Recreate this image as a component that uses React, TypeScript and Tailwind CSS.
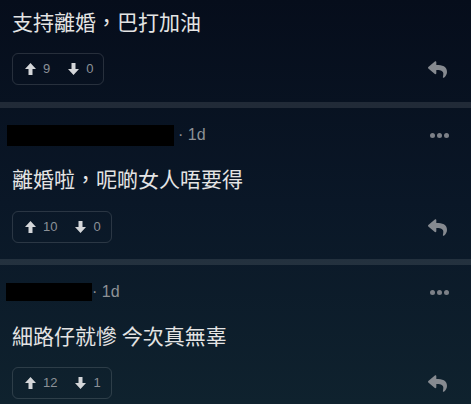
import React from "react";
import { FaReply } from "react-icons/fa";

const cjk = { fontFamily: '"Noto Sans CJK TC", "Noto Sans", sans-serif' };
const latin = { fontFamily: '"Liberation Sans", Arial, sans-serif' };

function UpArrow() {
  return (
    <svg width="11" height="12" viewBox="0 0 11 12" className="text-[#d4d6d9]">
      <path d="M5.5 0 L11 6 H7.5 V12 H3.5 V6 H0 Z" fill="currentColor" />
    </svg>
  );
}
function DownArrow() {
  return (
    <svg width="11" height="12" viewBox="0 0 11 12" className="text-[#d4d6d9]">
      <path d="M5.5 12 L11 6 H7.5 V0 H3.5 V6 H0 Z" fill="currentColor" />
    </svg>
  );
}

function Votes({ up, down, w }: { up: number; down: number; w: string }) {
  return (
    <div className="flex items-center justify-between px-3">
      <div
        className={`flex h-[32px] items-center rounded-[6px] border border-white/[0.13] pl-[12px] ${w}`}
        style={latin}
      >
        <UpArrow />
        <span className="ml-[7px] text-[13px] text-[#8b9097]">{up}</span>
        <span className="ml-[18px]">
          <DownArrow />
        </span>
        <span className="ml-[7px] text-[13px] text-[#8b9097]">{down}</span>
      </div>
      <FaReply className="mr-[11px] h-[19px] w-[21px] text-[#868a90]" />
    </div>
  );
}

function Dots() {
  return (
    <div className="mr-[10px] flex items-center gap-[2px]">
      <span className="h-[5px] w-[5px] rounded-full bg-[#7c8087]" />
      <span className="h-[5px] w-[5px] rounded-full bg-[#7c8087]" />
      <span className="h-[5px] w-[5px] rounded-full bg-[#7c8087]" />
    </div>
  );
}

function Header({ boxW, boxH, boxMl, dotMl }: { boxW: string; boxH: string; boxMl: string; dotMl: string }) {
  return (
    <div className="flex h-[22px] items-center justify-between pr-[12px]">
      <div className="flex items-center">
        <div className={`bg-black ${boxW} ${boxH} ${boxMl}`} />
        <span className={`text-[16px] text-[#8d9196] ${dotMl}`} style={latin}>
          · 1d
        </span>
      </div>
      <Dots />
    </div>
  );
}

function Body({ text }: { text: string }) {
  return (
    <p className="px-3 text-[21px] leading-[28px] text-[#e4e4e4]" style={cjk}>
      {text}
    </p>
  );
}

function Sep() {
  return <div className="h-[6px] bg-white/[0.1]" />;
}

export default function App() {
  return (
    <div className="h-[404px] w-[471px] overflow-hidden bg-gradient-to-b from-[#060d1b] via-[#0a1727] to-[#0f222e]">
      <div className="flex flex-col pt-[7px] pb-[17px]">
        <Body text="支持離婚，巴打加油" />
        <div className="mt-[18px]">
          <Votes up={9} down={0} w="w-[92px]" />
        </div>
      </div>
      <Sep />
      <div className="flex flex-col pt-[16px] pb-[16px]">
        <Header boxW="w-[167px]" boxH="h-[21px]" boxMl="ml-[7px]" dotMl="ml-[4px]" />
        <div className="mt-[18px]">
          <Body text="離婚啦，呢啲女人唔要得" />
        </div>
        <div className="mt-[19px]">
          <Votes up={10} down={0} w="w-[100px]" />
        </div>
      </div>
      <Sep />
      <div className="flex flex-col pt-[16px] pb-[16px]">
        <Header boxW="w-[86px]" boxH="h-[18px]" boxMl="ml-[6px]" dotMl="ml-0" />
        <div className="mt-[18px]">
          <Body text="細路仔就慘 今次真無辜" />
        </div>
        <div className="mt-[18px]">
          <Votes up={12} down={1} w="w-[100px]" />
        </div>
      </div>
    </div>
  );
}
